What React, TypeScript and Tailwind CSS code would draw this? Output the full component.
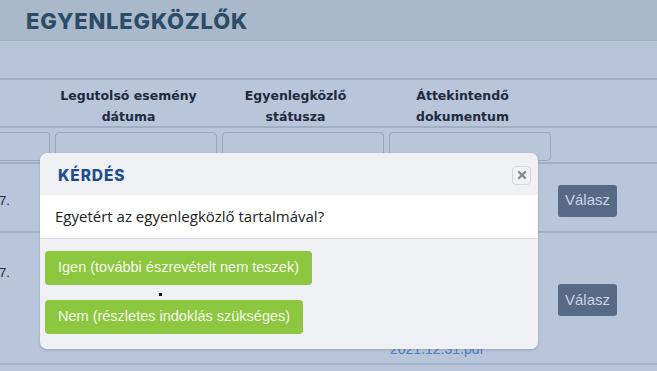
import { X } from "lucide-react";

const headers = [
  { l1: "", l2: "" },
  { l1: "Legutolsó esemény", l2: "dátuma" },
  { l1: "Egyenlegközlő", l2: "státusza" },
  { l1: "Áttekintendő", l2: "dokumentum" },
];

const FilterRow = () => (
  <div className="grid grid-cols-[50px_162px_162px_162px_1fr] gap-x-[5px] h-[36px] pt-[4px] border-b-2 border-[#a2b0c5]">
    <div className="h-[29px] border border-l-0 border-[#98a7bd] rounded-r-[4px]" />
    <div className="h-[29px] border border-[#98a7bd] rounded-[4px]" />
    <div className="h-[29px] border border-[#98a7bd] rounded-[4px]" />
    <div className="h-[29px] border border-[#98a7bd] rounded-[4px]" />
    <div />
  </div>
);

const ReplyButton = () => (
  <button className="ml-[2px] w-[59px] h-[32px] rounded-[3px] bg-[#566a85] text-[#c9d6e8] text-[15px] font-['Liberation_Sans',sans-serif]">
    Válasz
  </button>
);

export default function App() {
  return (
    <div className="relative w-[657px] h-[371px] overflow-hidden bg-[#b8c5da] font-['DejaVu_Sans',sans-serif]">
      <div className="h-[41px] bg-[#aab8cc] border-b border-[#9fadc1] pl-[26px] flex items-center">
        <h1 className="font-['Inter',sans-serif] font-extrabold text-[22px] tracking-[0.8px] text-[#2a4c66] leading-none pt-[2px]">
          EGYENLEGKÖZLŐK
        </h1>
      </div>
      <div className="h-[39px] bg-[#b6c3d9] border-b-2 border-[#a2b0c5]" />

      <div className="grid grid-cols-[50px_162px_162px_162px_1fr] gap-x-[5px] h-[48px] pt-[5px] border-b-2 border-[#a2b0c5] text-[12.5px] font-bold text-[#1f2a3d] leading-[21px]">
        {headers.map((h, i) => (
          <div key={i} className="flex flex-col items-center justify-center pr-[15px]">
            <span>{h.l1}</span>
            <span>{h.l2}</span>
          </div>
        ))}
        <div />
      </div>

      <FilterRow />

      <div className="grid grid-cols-[50px_162px_162px_162px_1fr] gap-x-[5px] h-[69px] pt-[6px] border-b-2 border-[#a2b0c5] items-center text-[13px] text-[#1f2a3d] font-['Liberation_Sans',sans-serif]">
        <div className="-ml-[1px]">7.</div>
        <div />
        <div />
        <div />
        <div>
          <ReplyButton />
        </div>
      </div>

      <div className="grid grid-cols-[50px_162px_162px_162px_1fr] gap-x-[5px] h-[132px] border-b-2 border-[#a2b0c5] text-[13px] text-[#1f2a3d] font-['Liberation_Sans',sans-serif]">
        <div className="-ml-[1px] pt-[30px]">7.</div>
        <div />
        <div />
        <div className="flex flex-col justify-end pb-[3px] pl-[1px]">
          <span className="text-[14px] text-[#4a80c4]">2021.12.31.pdf</span>
        </div>
        <div className="flex items-center pt-[4px]">
          <ReplyButton />
        </div>
      </div>

      <div className="absolute left-[40px] top-[153px] w-[498px] h-[196px] rounded-[7px] bg-[#eff0f4] shadow-[0_1px_3px_rgba(0,0,0,0.18)] flex flex-col overflow-hidden">
        <div className="h-[42px] flex items-center justify-between pl-[18px] pr-[7px]">
          <span className="font-['Inter',sans-serif] font-extrabold text-[15.5px] tracking-[0.9px] text-[#1e4c8e] pt-[4px]">
            KÉRDÉS
          </span>
          <button className="w-[19px] h-[19px] mt-[2px] rounded-[4px] border border-[#d3d5da] bg-[#f1f2f5] flex items-center justify-center text-[#888]">
            <X size={12} strokeWidth={4.5} />
          </button>
        </div>
        <div className="h-[44px] bg-white border-b border-[#d9dadd] flex items-center pl-[15px]">
          <span className="font-['Open_Sans',sans-serif] text-[15px] text-[#222]">
            Egyetért az egyenlegközlő tartalmával?
          </span>
        </div>
        <div className="flex flex-col items-start gap-[15px] pl-[5px] pt-[12px] font-['Liberation_Sans',sans-serif] text-[14.5px] text-[#f4f9ec]">
          <button className="h-[34px] px-[13px] rounded-[4px] bg-[#8dc63f]">
            Igen (további észrevételt nem teszek)
          </button>
          <button className="h-[34px] px-[13px] rounded-[4px] bg-[#8dc63f]">
            Nem (részletes indoklás szükséges)
          </button>
        </div>
      </div>

      <span className="absolute left-[159px] top-[293px] w-[3px] h-[3px] bg-black" />
    </div>
  );
}
